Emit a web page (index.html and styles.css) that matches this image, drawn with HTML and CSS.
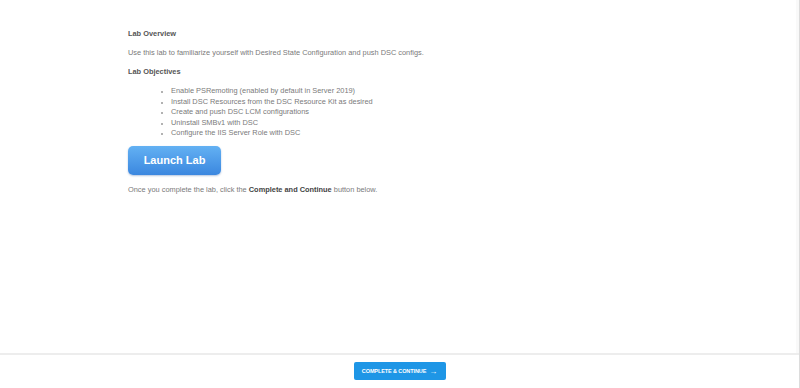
FILE: index.html
```html
<!DOCTYPE html>
<html>
  <head>
    <meta name="viewport" content="width=device-width, initial-scale=1" />
    <link rel="stylesheet" href="styles.css">
  </head>
  <body>
    <div class="page">
      <div class="lesson">
        <div class="lesson-body">
          <h3 class="heading">Lab Overview</h3>
          <p class="text">Use this lab to familiarize yourself with Desired State Configuration and push DSC configs.</p>
          <h3 class="heading">Lab Objectives</h3>
          <ul class="objectives">
            <li>Enable PSRemoting (enabled by default in Server 2019)</li>
            <li>Install DSC Resources from the DSC Resource Kit as desired</li>
            <li>Create and push DSC LCM configurations</li>
            <li>Uninstall SMBv1 with DSC</li>
            <li>Configure the IIS Server Role with DSC</li>
          </ul>
          <a class="launch-button">Launch Lab</a>
          <p class="text">Once you complete the lab, click the <b>Complete and Continue</b> button below.</p>
        </div>
      </div>
      <div class="footer">
        <a class="complete-button">COMPLETE &amp; CONTINUE <span class="arrow">&#8594;</span></a>
      </div>
    </div>
  </body>
</html>
```

FILE: styles.css
```css
html, body {
  margin: 0;
  padding: 0;
  background: #fff;
}

.page {
  display: flex;
  flex-direction: column;
  width: 800px;
  height: 388px;
  box-sizing: border-box;
  border-right: 1px solid #dcdcdc;
  font-family: "Liberation Sans", Arial, sans-serif;
}

.lesson {
  flex: 1;
  padding: 29px 0 0 128px;
  box-sizing: border-box;
  border-right: 3px solid #f9f9f9;
}

.lesson-body {
  width: 560px;
}

.heading {
  margin: 0 0 10px 0;
  font-size: 7.4px;
  font-weight: bold;
  color: #555;
  line-height: 9px;
}

.text {
  margin: 0 0 10px 0;
  font-size: 7.4px;
  color: #7a7a7a;
  line-height: 9px;
}

.text b {
  color: #444;
}

.objectives {
  margin: 0 0 7px 0;
  padding-left: 43px;
  font-size: 7.4px;
  color: #7a7a7a;
  line-height: 10.5px;
}

.objectives li::marker {
  font-size: 6px;
  color: #999;
}

.launch-button {
  display: inline-flex;
  align-items: center;
  justify-content: center;
  width: 93px;
  height: 29px;
  margin-bottom: 10px;
  border-radius: 5px;
  background: linear-gradient(to bottom, #63b1f3, #3b87df);
  box-shadow: 0 1px 2px rgba(40, 90, 160, 0.35);
  color: #fff;
  font-size: 11px;
  font-weight: bold;
}

.footer {
  display: flex;
  justify-content: center;
  align-items: flex-start;
  height: 35px;
  padding-top: 7px;
  box-sizing: border-box;
  border-top: 2px solid #ededed;
}

.complete-button {
  display: inline-flex;
  align-items: center;
  justify-content: center;
  gap: 3px;
  width: 92px;
  height: 18px;
  border-radius: 2px;
  background: #1e96e6;
  color: #fff;
  font-size: 5.5px;
  font-weight: bold;
  letter-spacing: -0.1px;
}

.complete-button .arrow {
  font-size: 8px;
  font-weight: bold;
}
```
